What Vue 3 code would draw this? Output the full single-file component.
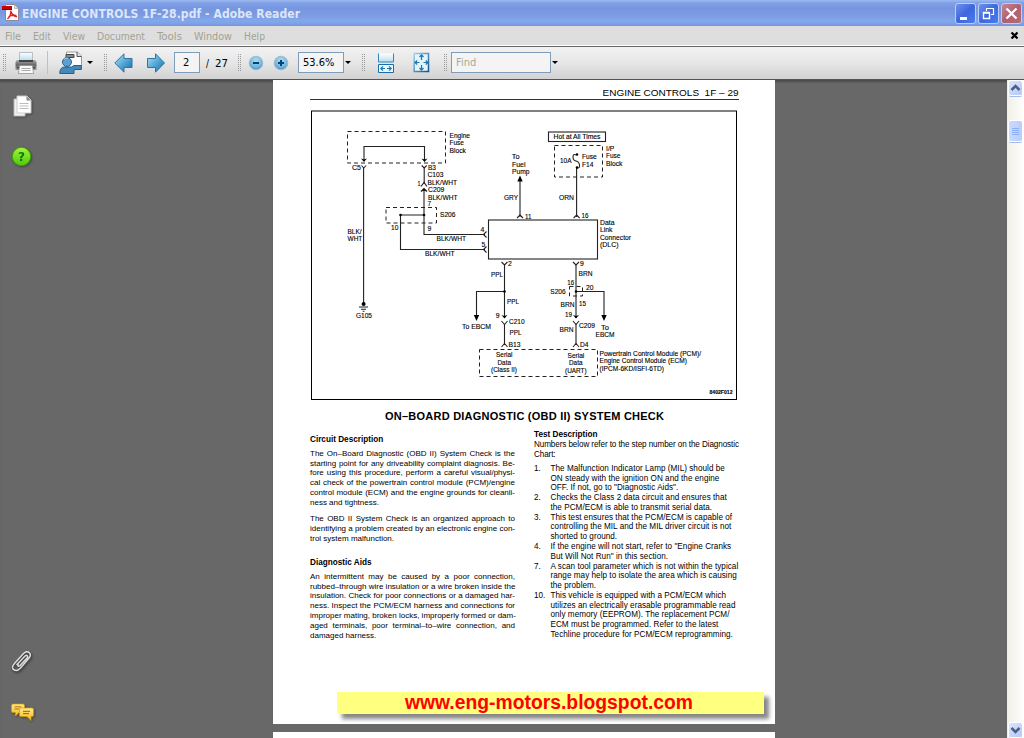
<script setup>
import { ref } from 'vue'

const menus = [
  { name: 'File', width: 16, gap: 5 },
  { name: 'Edit', width: 18, gap: 12 },
  { name: 'View', width: 22, gap: 12 },
  { name: 'Document', width: 48, gap: 12 },
  { name: 'Tools', width: 25, gap: 12 },
  { name: 'Window', width: 38, gap: 12 },
  { name: 'Help', width: 21, gap: 12 },
]

const page = ref('2')
const zoom = ref('53.6%')
const find = ref('')

const leftBlocks = [
  {
    title: 'Circuit Description',
    paragraphs: [
      [
        'The On–Board Diagnostic (OBD II) System Check is the',
        'starting point for any driveability complaint diagnosis. Be-',
        'fore using this procedure, perform a careful visual/physi-',
        'cal check of the powertrain control module (PCM)/engine',
        'control module (ECM) and the engine grounds for cleanli-',
        'ness and tightness.',
      ],
      [
        'The OBD II System Check is an organized approach to',
        'identifying a problem created by an electronic engine con-',
        'trol system malfunction.',
      ],
    ],
  },
  {
    title: 'Diagnostic Aids',
    paragraphs: [
      [
        'An intermittent may be caused by a poor connection,',
        'rubbed–through wire insulation or a wire broken inside the',
        'insulation. Check for poor connections or a damaged har-',
        'ness. Inspect the PCM/ECM harness and connections for',
        'improper mating, broken locks, improperly formed or dam-',
        'aged terminals, poor terminal–to–wire connection, and',
        'damaged harness.',
      ],
    ],
  },
]

const steps = [
  { no: '1.', lines: ['The Malfunction Indicator Lamp (MIL) should be', 'ON steady with the ignition ON and the engine', 'OFF. If not, go to "Diagnostic Aids".'] },
  { no: '2.', lines: ['Checks the Class 2 data circuit and ensures that', 'the PCM/ECM is able to transmit serial data.'] },
  { no: '3.', lines: ['This test ensures that the PCM/ECM is capable of', 'controlling the MIL and the MIL driver circuit is not', 'shorted to ground.'] },
  { no: '4.', lines: ['If the engine will not start, refer to "Engine Cranks', 'But Will Not Run" in this section.'] },
  { no: '7.', lines: ['A scan tool parameter which is not within the typical', 'range may help to isolate the area which is causing', 'the problem.'] },
  { no: '10.', lines: ['This vehicle is equipped with a PCM/ECM which', 'utilizes an electrically erasable programmable read', 'only memory (EEPROM). The replacement PCM/', 'ECM must be programmed. Refer to the latest', 'Techline procedure for PCM/ECM reprogramming.'] },
]

// text, x, baseline, width
const labels = [
  ['Engine', 449.5, 137.7, 20.5], ['Fuse', 449.5, 145, 14.5], ['Block', 449.5, 152.5, 16.5],
  ['C5', 352, 169.5, 9], ['B3', 428, 169.5, 8], ['C103', 427.5, 177, 16],
  ['1', 417.5, 186, 3], ['BLK/WHT', 427.5, 184.7, 29.5], ['C209', 428, 192, 16.3],
  ['BLK/WHT', 428, 199.5, 29.5], ['7', 427.5, 206, 3.6], ['S206', 440, 217, 15.5],
  ['10', 391, 229.5, 7.3], ['9', 427.5, 231, 3.8],
  ['BLK/', 347.5, 234, 14], ['WHT', 347.5, 241.3, 14.8],
  ['BLK/WHT', 436.5, 241, 29.5], ['BLK/WHT', 425, 256.2, 29.5], ['G105', 356, 317.5, 16],
  ['Hot at All Times', 553.5, 139.3, 47],
  ['To', 511.8, 159, 7.8], ['Fuel', 512, 166.5, 13.5], ['Pump', 512, 174, 17.5],
  ['GRY', 504, 200, 14], ['ORN', 559, 200, 15], ['11', 525, 218.5, 6.5], ['16', 581.5, 218, 7],
  ['10A', 560, 163, 11.5], ['Fuse', 582, 159, 14.8], ['F14', 582, 166.5, 11.5],
  ['I/P', 606, 150.5, 8.3], ['Fuse', 606, 158, 14.5], ['Block', 606, 165.5, 16.5],
  ['Data', 600, 225, 14.5], ['Link', 600, 232.3, 12.5], ['Connector', 600, 239.8, 31], ['(DLC)', 600, 247.3, 18.5],
  ['4', 480.5, 231.5, 3.8], ['5', 481.5, 247.3, 3.8], ['2', 508, 266, 3.8], ['9', 580, 266, 3.8],
  ['PPL', 491, 277, 12], ['BRN', 578.5, 276.3, 14], ['16', 567.3, 284.5, 6.8], ['20', 586, 289.5, 7.5],
  ['S206', 550.3, 294, 15.3], ['BRN', 560.5, 307, 14], ['15', 579, 305.7, 7], ['PPL', 507, 304, 12],
  ['9', 495.7, 317.8, 3.8], ['19', 565, 317.3, 7], ['C210', 509, 324, 15.5], ['C209', 579, 328, 16],
  ['To', 601, 329.6, 8], ['EBCM', 595.5, 337, 19], ['To EBCM', 462, 328.5, 29],
  ['PPL', 509.5, 335, 12], ['BRN', 559.5, 332.3, 14], ['B13', 508.5, 347.3, 12], ['D4', 580, 347.3, 8.5],
  ['Serial', 496, 357.3, 16.5], ['Data', 497.5, 364.7, 13.5], ['(Class II)', 491, 372, 26],
  ['Serial', 567.5, 358, 16.8], ['Data', 569, 365.3, 13.5], ['(UART)', 565, 372.5, 21.7],
  ['Powertrain Control Module (PCM)/', 599.5, 355.7, 101.5],
  ['Engine Control Module (ECM)', 599.5, 363.2, 87.5],
  ['(IPCM-6KD/ISFI-6TD)', 599.5, 370.6, 64.5],
]
</script>

<template>
  <div class="window">
    <div class="titlebar">
      <svg class="app-icon" width="18" height="18" viewBox="0 0 18 18">
        <path d="M3.500 .5h9l4 4v12h-13z" fill="#fff" stroke="#8a8a98" />
        <path d="M12.500 .5v4h4z" fill="#ddd" stroke="#999" stroke-width=".6" />
        <path d="M8.800 6.500c.2 4-1.500 7-3.400 8.600M8.800 7c.6 3 3 5 6.200 5.800M6.500 12.600c2.500-1.300 5-1.600 8-1.200" fill="none" stroke="#e02020" stroke-width="1.300" />
        <path d="M0 2h10v4H0z" fill="#c80000" />
        <path d="M0 5h10v1H0z" fill="#860000" />
      </svg>
      <svg class="title" width="290" height="24">
        <text x="1" y="17" textLength="278" lengthAdjust="spacing">ENGINE CONTROLS 1F-28.pdf - Adobe Reader</text>
      </svg>
      <div class="win-buttons">
        <div class="win-button"><svg width="19" height="19"><path d="M4 13h7v3H4z" fill="#fff" /></svg></div>
        <div class="win-button">
          <svg width="19" height="19"><path d="M7.500 7V4.500h7v6h-2.500M7 4.500h8" fill="none" stroke="#fff" stroke-width="1.200" /><path d="M4.500 8.500h6v6h-6zM4 9h7" fill="none" stroke="#fff" stroke-width="1.400" /></svg>
        </div>
        <div class="win-button close"><svg width="19" height="19"><path d="M4.500 4.500l10 10M14.500 4.500l-10 10" stroke="#fff" stroke-width="2.400" /></svg></div>
      </div>
    </div>

    <div class="menubar">
      <svg v-for="m in menus" :key="m.name" class="menu" :width="m.width + m.gap" height="18">
        <text :x="m.gap" y="12.500" :textLength="m.width" lengthAdjust="spacingAndGlyphs">{{ m.name }}</text>
      </svg>
      <svg class="doc-close" width="9" height="9"><path d="M1.500 1.500l6 6M7.500 1.500l-6 6" stroke="#000" stroke-width="2.300" /></svg>
    </div>

    <div class="toolbar">
      <div class="grip"></div>
      <svg class="printer" width="24" height="24" viewBox="0 0 24 24">
        <defs>
          <linearGradient id="paper" x1="0" y1="0" x2="0" y2="1"><stop offset="0" stop-color="#fff" /><stop offset="1" stop-color="#b9dcec" /></linearGradient>
          <linearGradient id="body" x1="0" y1="0" x2="0" y2="1"><stop offset="0" stop-color="#aaa" /><stop offset=".5" stop-color="#666" /><stop offset="1" stop-color="#999" /></linearGradient>
        </defs>
        <path d="M5.500 1.500h13v8h-13z" fill="url(#paper)" stroke="#b5bfc4" />
        <path d="M3 9h18l1.500 2v8h-21v-8z" fill="url(#body)" />
        <path d="M5 9h14v2H5zM3 16h18v1.500H3z" fill="#444" />
        <path d="M5.500 14.500h13l1 8h-15z" fill="#f8f8f8" stroke="#888" stroke-width=".7" />
        <path d="M7.500 17.500h9M7.500 19.500h9" stroke="#aaa" />
      </svg>
      <div class="divider"></div>
      <svg class="mail" width="24" height="24" viewBox="0 0 24 24">
        <path d="M7.500 1h11l4 4v13h-15z" fill="#fff" stroke="#999" />
        <path d="M18 1v4.500h4.500" fill="#ddd" stroke="#555" />
        <path d="M7 3.500h8v3H7z" fill="#888" stroke="#444" />
        <circle cx="8" cy="11" r="4.500" fill="#5d9fcf" stroke="#27668f" />
        <path d="M.8 22.500c0-5 2-6.500 6-6.500h6l2-1.500h7.500v4H15v4z" fill="#438abb" stroke="#205f91" />
        <path d="M5 8.500c1-1.300 3-1.800 4-1.200" stroke="#9fd0ed" fill="none" />
      </svg>
      <div class="caret mail-caret"></div>
      <div class="grip grip-nav"></div>
      <svg class="prev" width="20" height="20" viewBox="0 0 20 20">
        <defs><linearGradient id="arrow" x1="0" y1="0" x2="1" y2="1"><stop offset="0" stop-color="#b3e3f5" /><stop offset=".5" stop-color="#55a8d6" /><stop offset="1" stop-color="#176aa8" /></linearGradient></defs>
        <path d="M.8 10L10 .8V5.500h8v9h-8v4.700z" fill="url(#arrow)" stroke="#33749f" />
      </svg>
      <svg class="next" width="20" height="20" viewBox="0 0 20 20">
        <path d="M18.500 10L9.500 .8V5.500h-8v9h8v4.700z" fill="url(#arrow)" stroke="#33749f" />
      </svg>
      <input v-model="page" class="field page-field" type="text" />
      <svg class="pages" width="26" height="18"><text x="1" y="13" textLength="3" lengthAdjust="spacingAndGlyphs">/</text><text x="10" y="13" textLength="13" lengthAdjust="spacingAndGlyphs">27</text></svg>
      <div class="grip grip-zoom"></div>
      <svg class="round minus" width="16" height="16" viewBox="0 0 16 16">
        <defs><radialGradient id="ball" cx=".5" cy=".3" r=".75"><stop offset="0" stop-color="#a9dcf2" /><stop offset=".65" stop-color="#72b5dc" /><stop offset="1" stop-color="#3e83b5" /></radialGradient></defs>
        <circle cx="8" cy="8" r="6.800" fill="url(#ball)" stroke="#9eb9cc" /><path d="M5 8h6" stroke="#08426f" stroke-width="2" />
      </svg>
      <svg class="round plus" width="16" height="16" viewBox="0 0 16 16">
        <circle cx="8" cy="8" r="6.800" fill="url(#ball)" stroke="#9eb9cc" /><path d="M5 8h6M8 5v6" stroke="#08426f" stroke-width="2" />
      </svg>
      <input v-model="zoom" class="field zoom-field" type="text" />
      <div class="caret"></div>
      <div class="grip grip-fit"></div>
      <svg class="fit-width" width="18" height="22" viewBox="0 0 18 22">
        <path d="M1.500 1.500h15v8.500h-15z" fill="url(#paper)" />
        <path d="M1.500 1.500V10h15V1.500" fill="none" stroke="#3187bc" />
        <path d="M1.500 12.500h15v8h-15z" fill="#eaf7fd" stroke="#1b6ea7" />
        <path d="M4 16.500h4M10 16.500h4M6 14.300L3.800 16.500 6 18.700M12 14.300l2.200 2.200-2.200 2.200" stroke="#2373a8" fill="none" stroke-width="1.200" />
      </svg>
      <svg class="fit-page" width="17" height="21" viewBox="0 0 17 21">
        <defs><linearGradient id="sheet" x1="0" y1="0" x2="1" y2="1"><stop offset="0" stop-color="#9fd3ee" /><stop offset="1" stop-color="#0c5590" /></linearGradient></defs>
        <path d="M1.200 1.500h14.300v18H1.200z" fill="#e2f4fc" stroke="url(#sheet)" stroke-width="1.500" />
        <path d="M8.500 3v5M8.500 13v5M2 10.500h4.500M10.500 10.500H15M6.500 5l2-2.200 2 2.200M6.500 16l2 2.200 2-2.200M4.200 8.500l-2.200 2 2.200 2M12.800 8.500l2.200 2-2.200 2" stroke="#2373a8" fill="none" stroke-width="1.200" />
      </svg>
      <div class="grip grip-find"></div>
      <input v-model="find" class="field find-field" type="text" placeholder="Find" />
      <div class="caret"></div>
    </div>

    <div class="content">
      <div class="sidebar">
        <svg class="pages-icon" width="20" height="23" viewBox="0 0 20 23">
          <path d="M1 4h11v17H1z" fill="#f1f1f1" stroke="#bbb" />
          <path d="M4 1h10l4 4v13H4z" fill="#fff" stroke="#ccc" />
          <path d="M13.500 1v4.500H18z" fill="#888" />
          <path d="M6.500 8.500h9M6.500 11h9M6.500 13.500h9" stroke="#bbb" />
        </svg>
        <svg class="help-icon" width="22" height="22" viewBox="0 0 22 22">
          <defs><linearGradient id="green" x1="0" y1="0" x2="0" y2="1"><stop offset="0" stop-color="#a3f53c" /><stop offset="1" stop-color="#4fc80c" /></linearGradient></defs>
          <circle cx="10.500" cy="10.500" r="9.200" fill="url(#green)" stroke="#35a400" />
          <text x="10.500" y="15" text-anchor="middle">?</text>
        </svg>
        <svg class="clip-icon" width="24" height="25" viewBox="0 0 24 25">
          <g fill="none" stroke-linecap="round" stroke-linejoin="round">
            <path d="M5.500 14.500L14 5.500c4-4 8 0 5 4L10.500 19.500c-4 5-11 1-6.500-4.500M7.500 15.500l7.500-8c2-1.500 3.500.2 2 2L10 17c-1.500 1.500-3 0-1.500-1.500l4-4.500" stroke="#444" stroke-width="2.700" />
            <path d="M4 15L13.500 4.500c4-4 9 0 5.500 4.500L10.500 19c-4.500 5-11 1-6.500-4M10.500 19l9-10.500M7 15.500l8-8.500c2-1.500 3.500.2 2 2L10 16.500c-1.500 1.500-3 0-1.800-1.500" stroke="#ddd" stroke-width="1.500" />
          </g>
        </svg>
        <svg class="comment-icon" width="25" height="20" viewBox="0 0 25 20">
          <defs><linearGradient id="gold" x1="0" y1="0" x2="0" y2="1"><stop offset="0" stop-color="#ffe88a" /><stop offset="1" stop-color="#f5b918" /></linearGradient></defs>
          <path d="M2 1h10q1.500 0 1.500 1.500V8q0 1.500-1.500 1.500H8L4.500 13V9.500H2Q.5 9.500.5 8V2.500Q.5 1 2 1z" fill="url(#gold)" stroke="#d99c10" stroke-width=".7" />
          <path d="M3.500 3.800h7M3.500 6h5" stroke="#a77b13" />
          <path d="M10 5h11q1.500 0 1.500 1.500v5.500q0 1.500-1.500 1.500h-1V17.500L16 13.500h-6q-1.500 0-1.500-1.500V6.500Q8.500 5 10 5z" fill="url(#gold)" stroke="#d99c10" stroke-width=".7" />
          <path d="M12 8.300h7M12 10.600h6" stroke="#8c6610" />
        </svg>
      </div>

      <div class="viewer">
        <div class="page">
          <div class="page-head">
            <svg width="429" height="18"><text x="292.500" y="15.800" textLength="136" lengthAdjust="spacingAndGlyphs">ENGINE CONTROLS&nbsp; 1F – 29</text></svg>
          </div>

          <svg class="diagram" width="427" height="291" viewBox="311 110 427 291">
            <rect x="311.500" y="111" width="425" height="288.500" fill="#fff" stroke="#000" stroke-width="1" />
            <g class="dashed">
              <rect x="347.500" y="131.500" width="98" height="31.500" />
              <rect x="386" y="207.500" width="50.500" height="15.500" />
              <rect x="554.500" y="145.500" width="48" height="31.500" />
              <rect x="569.500" y="286.500" width="13" height="9.500" />
              <rect x="479.500" y="349.500" width="118" height="27" />
            </g>
            <g class="wire">
              <rect x="548.500" y="132" width="57" height="9.500" />
              <rect x="488.500" y="220" width="109" height="39" />
              <path d="M364 160.500V146.500H424.500V160.500M363.600 168V304M424.200 167V184M424 190V234.500H485M424 215H400.500V249.500H485" />
              <path d="M520 180V217M576.600 168V217M504.500 264V318M504.500 324V345M504.500 291.500H476.500V316M576 264V318M576 324V345M576 291.500H604V316" />
              <path d="M361.500 165.500l2.300 2.500 2.300-2.500M421.700 165.500l2.500 2.500 2.500-2.500M421 186.500l3-4 3 4M421 191.500l3-3 3 3" />
              <path d="M517 218l3-3 3 3M573.600 218l3-3 3 3M486.500 231.500l-3 3 3 3M486.500 246.500l-3 3 3 3" />
              <path d="M501.500 262l3 3 3-3M573 262l3 3 3-3M501.500 321l3 3.500 3-3.500M573 321l3 3.500 3-3.500" />
              <path d="M501.500 347l3-3.500 3 3.500M573 347l3-3.500 3 3.500" />
              <path d="M359 307H368M361 309.300H366M362.700 311.300H364.500" />
              <path d="M576 155q-3-1.500-3 2t3 4 3.500 4-2.500 3" />
            </g>
            <path d="M361 158.500l3 3.500 3-3.500-3 1zM421.500 158.500l3 3.500 3-3.500-3 1zM517.300 181.500l2.700-6 2.700 6zM473.800 315l2.700 6 2.700-6zM601.300 315l2.700 6 2.700-6zM501.500 315l3 3.500 3-3.500-3 1zM573 315l3 3.500 3-3.500-3 1zM421.500 191.500l2.500-3 2.500 3-2.500-1z" />
            <circle v-for="(p, i) in [[424, 215], [400.500, 215], [577, 154.500], [577, 167.500], [504.500, 291.500], [576, 291.500]]" :key="i" :cx="p[0]" :cy="p[1]" r="1.300" />
            <circle cx="363.600" cy="304" r="2" />
            <text v-for="(l, i) in labels" :key="i" :x="l[1]" :y="l[2]" :textLength="l[3]" lengthAdjust="spacingAndGlyphs">{{ l[0] }}</text>
            <text class="figure-no" x="709.500" y="394" textLength="23" lengthAdjust="spacingAndGlyphs">8402F012</text>
          </svg>

          <svg class="heading" width="429" height="20"><text x="75" y="15" textLength="279" lengthAdjust="spacing">ON–BOARD DIAGNOSTIC (OBD II) SYSTEM CHECK</text></svg>

          <div class="columns">
            <div class="column left">
              <div v-for="block in leftBlocks" :key="block.title" class="block">
                <div class="subtitle">{{ block.title }}</div>
                <div v-for="(lines, i) in block.paragraphs" :key="i" class="paragraph">
                  <div v-for="line in lines" :key="line" class="line">{{ line }}</div>
                </div>
              </div>
            </div>
            <div class="column right">
              <div class="subtitle">Test Description</div>
              <div class="intro">
                <div class="line">Numbers below refer to the step number on the Diagnostic</div>
                <div class="line">Chart:</div>
              </div>
              <div v-for="step in steps" :key="step.no" class="step">
                <div class="no">{{ step.no }}</div>
                <div>
                  <div v-for="line in step.lines" :key="line" class="line">{{ line }}</div>
                </div>
              </div>
            </div>
          </div>

          <div class="banner">
            <svg width="427" height="22"><text x="68" y="17" textLength="288" lengthAdjust="spacingAndGlyphs">www.eng-motors.blogspot.com</text></svg>
          </div>
        </div>
        <div class="page-next"></div>
      </div>

      <div class="scrollbar">
        <div class="scroll-button"><svg width="13" height="14"><path d="M2.500 9l4-4 4 4" fill="none" stroke="#4d6185" stroke-width="2.600" /></svg></div>
        <div class="thumb"><i></i><i></i><i></i><i></i></div>
        <div class="scroll-button down"><svg width="13" height="14"><path d="M2.500 5l4 4 4-4" fill="none" stroke="#4d6185" stroke-width="2.600" /></svg></div>
      </div>
    </div>
  </div>
</template>

<style>
body {
  margin: 0;
  overflow: hidden;
}
</style>

<style scoped>
.window {
  width: 1024px;
  height: 738px;
  display: flex;
  flex-direction: column;
  font-family: "DejaVu Sans Condensed", "DejaVu Sans", sans-serif;
  overflow: hidden;
}

svg {
  display: block;
  flex: none;
  overflow: visible;
}

.titlebar {
  height: 26px;
  display: flex;
  flex: none;
  align-items: center;
  background: linear-gradient(#9db9ee 0, #92b3ee 1px, #7ea0e8 3px, #7896df 8px, #7b99e1 14px, #82a8ea 21px, #7d9fe6 24px, #7892dc 26px);
}

.app-icon {
  margin-left: 2px;
}

.title {
  margin-left: 1px;
  font: bold 12px "DejaVu Sans Condensed", "DejaVu Sans", sans-serif;
  fill: #dce6fb;
}

.win-buttons {
  display: flex;
  gap: 2px;
  margin-left: auto;
  margin-right: 2px;
}

.win-button {
  width: 19px;
  height: 19px;
  border: 1px solid #bccdf5;
  border-radius: 3px;
  background: linear-gradient(135deg, #6e92ee, #3e67dc 50%, #4a7cf0);
}

.close {
  background: linear-gradient(135deg, #c48797, #b0606e 50%, #b46a74);
}

.menubar {
  height: 19px;
  display: flex;
  flex: none;
  align-items: center;
  background: #dedede;
  border-bottom: 1px solid #fff;
  font-size: 11px;
  fill: #a4a292;
}

.doc-close {
  margin-left: auto;
  margin-right: 5px;
}

.toolbar {
  height: 34px;
  box-sizing: border-box;
  display: flex;
  flex: none;
  align-items: center;
  padding-bottom: 1px;
  background: linear-gradient(#f2f2f2, #e6e6e6 50%, #d2d2d2);
  border-top: 1px solid #666;
  border-bottom: 1px solid #555;
  font-size: 11px;
}

.grip {
  width: 4px;
  height: 17px;
  margin-left: 3px;
  background-image: radial-gradient(circle at .5px .5px, #999 .7px, transparent .8px);
  background-size: 2px 2px;
}

.printer {
  margin-left: 7px;
}

.divider {
  width: 1px;
  height: 23px;
  margin-left: 9px;
  background: #c4c0b8;
}

.mail {
  margin-left: 11px;
}

.caret {
  width: 0;
  height: 0;
  margin-left: 1px;
  border: 3px solid transparent;
  border-top-color: #000;
  border-bottom: 0;
}

.mail-caret {
  margin-left: 4px;
}

.grip-nav {
  margin-left: 11px;
}

.prev {
  margin-left: 6px;
}

.next {
  margin-left: 12px;
}

.field {
  box-sizing: border-box;
  height: 21px;
  border: 1px solid #7f9db9;
  background: #f4f4f4;
  padding: 0 0 1px 4px;
  font-family: inherit;
  font-size: 11px;
  color: #000;
  outline: none;
}

.page-field {
  width: 26px;
  margin-left: 8px;
  padding-left: 8px;
}

.pages {
  margin-left: 5px;
}

.grip-zoom {
  margin-left: 7px;
}

.minus {
  margin-left: 6px;
}

.plus {
  margin-left: 9px;
}

.zoom-field {
  width: 46px;
  margin-left: 9px;
}

.grip-fit {
  margin-left: 11px;
}

.fit-width {
  margin-left: 11px;
}

.fit-page {
  margin-left: 18px;
}

.grip-find {
  margin-left: 14px;
}

.find-field {
  width: 100px;
  margin-left: 3px;
}

.find-field::placeholder {
  color: #aaa898;
  opacity: 1;
}

.content {
  height: 658px;
  display: flex;
  background: #686868;
}

.sidebar {
  width: 273px;
  display: flex;
  flex-direction: column;
  box-shadow: inset 0 3px 2px -1px #4c4c4c;
}

.sidebar svg {
  filter: drop-shadow(1px 1px 1px #444);
}

.pages-icon {
  margin: 15px 0 0 13px;
}

.help-icon {
  margin: 28px 0 0 11px;
  font: bold 12px "DejaVu Sans", sans-serif;
  fill: #0b7512;
}

.clip-icon {
  margin: auto 0 0 10px;
}

.comment-icon {
  margin: 29px 0 15px 11px;
}

.viewer {
  width: 734px;
  box-shadow: inset 0 3px 2px -1px #4c4c4c;
}

.page {
  width: 502px;
  height: 644px;
  box-sizing: border-box;
  padding-left: 37px;
  background: #fff;
  font-family: "Liberation Sans", Arial, sans-serif;
  color: #000;
}

.page-head {
  width: 429px;
  height: 19px;
  border-bottom: 1px solid #333;
  font-size: 9.8px;
}

.diagram {
  margin: 10px 0 0 1px;
  font-size: 7px;
}

.diagram text {
  stroke: #000;
  stroke-width: .12px;
}

.dashed {
  fill: none;
  stroke: #222;
  stroke-width: 1;
  stroke-dasharray: 4 3;
}

.wire {
  fill: none;
  stroke: #222;
  stroke-width: 1.1;
}

.figure-no {
  font-size: 5px;
  font-weight: bold;
}

.heading {
  margin-top: 4px;
  font-size: 11px;
  font-weight: bold;
}

.columns {
  display: flex;
  height: 267px;
  font-size: 8.15px;
  line-height: 9.76px;
}

.column {
  width: 205px;
}

.left {
  padding-top: 9.5px;
  box-sizing: border-box;
  font-size: 8px;
}

.right {
  margin-left: 19px;
  padding-top: 4.6px;
}

.line {
  white-space: nowrap;
}

.left .line {
  text-align-last: justify;
}

.left .line:last-child {
  text-align-last: left;
}

.subtitle {
  font-weight: bold;
  font-size: 8.2px;
}

.paragraph {
  margin-top: 4.5px;
  margin-bottom: 7px;
}

.paragraph + .paragraph {
  margin-top: 7px;
}

.block + .block {
  margin-top: 14px;
}

.intro {
  margin: 1px 0 4px;
  letter-spacing: -.1px;
}

.step {
  display: flex;
}

.step .line {
  letter-spacing: .04px;
}

.no {
  width: 16.5px;
  flex: none;
}

.banner {
  width: 427px;
  height: 22px;
  margin: 0 0 0 27px;
  background: #ffff80;
  box-shadow: 5px 5px 4px #888;
  font-size: 20px;
  font-weight: bold;
  fill: #f00;
}

.page-next {
  width: 502px;
  height: 6px;
  margin-top: 8px;
  background: #fff;
}

.scrollbar {
  width: 17px;
  box-sizing: border-box;
  padding: 1px 2px;
  display: flex;
  flex-direction: column;
  background: linear-gradient(90deg, #f0efe8, #fefefb);
}

.scroll-button {
  width: 13px;
  height: 14px;
  border-radius: 2px;
  background: linear-gradient(135deg, #dce6fe, #b3c8f8);
  box-shadow: 0 0 0 1px #fff, 0 2px 0 #a5bbe8;
}

.thumb {
  height: 20px;
  margin-top: 26px;
  display: flex;
  flex-direction: column;
  align-items: center;
  justify-content: center;
  gap: 1px;
  border-radius: 2px;
  background: linear-gradient(90deg, #cbdafe, #b9cdfb);
  box-shadow: 0 0 0 1px #fff, 0 2px 0 #a5bbe8;
}

.thumb i {
  width: 7px;
  height: 1px;
  background: #8cb0f8;
}

.down {
  margin-top: auto;
}
</style>
